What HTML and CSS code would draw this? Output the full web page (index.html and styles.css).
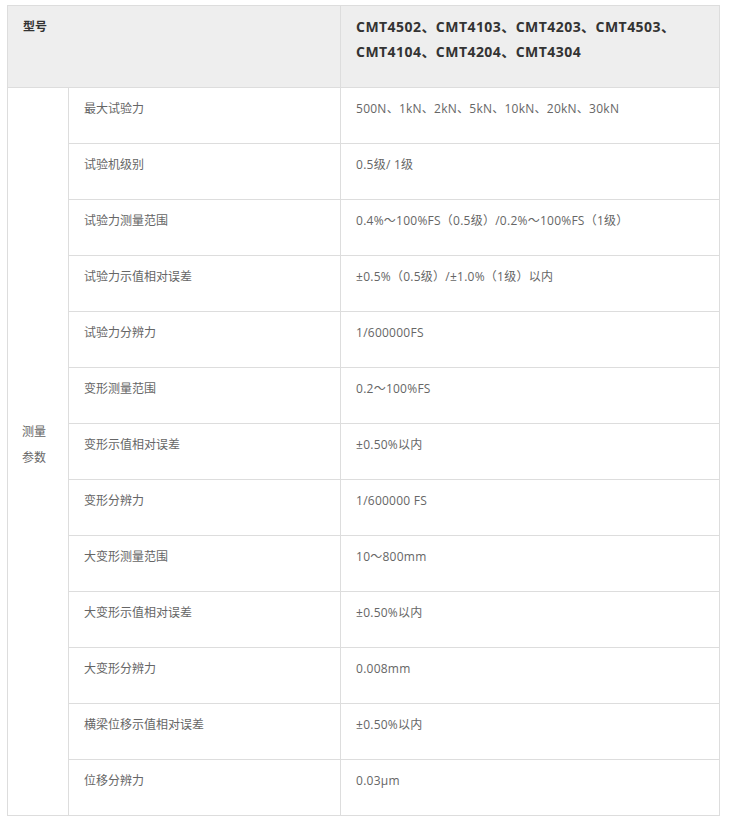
FILE: index.html
```html
<!DOCTYPE html>
<html lang="zh-CN">
<head>
<meta charset="utf-8">
<title>CMT 参数表</title>
<link rel="stylesheet" href="styles.css">
</head>
<body>
<div class="wrap">
<table class="spec">
  <colgroup>
    <col class="c1"><col class="c2"><col class="c3">
  </colgroup>
  <thead>
    <tr class="head">
      <th colspan="2" class="h-label">型号</th>
      <th class="h-models">CMT4502、CMT4103、CMT4203、CMT4503、CMT4104、CMT4204、CMT4304</th>
    </tr>
  </thead>
  <tbody>
    <tr><td rowspan="13" class="group">测量参数</td><td>最大试验力</td><td class="val">500N、1kN、2kN、5kN、10kN、20kN、30kN</td></tr>
    <tr><td>试验机级别</td><td class="val">0.5级/ 1级</td></tr>
    <tr><td>试验力测量范围</td><td class="val">0.4%～100%FS（0.5级）/0.2%～100%FS（1级）</td></tr>
    <tr><td>试验力示值相对误差</td><td class="val">±0.5%（0.5级）/±1.0%（1级）以内</td></tr>
    <tr><td>试验力分辨力</td><td class="val">1/600000FS</td></tr>
    <tr><td>变形测量范围</td><td class="val">0.2～100%FS</td></tr>
    <tr><td>变形示值相对误差</td><td class="val">±0.50%以内</td></tr>
    <tr><td>变形分辨力</td><td class="val">1/600000 FS</td></tr>
    <tr><td>大变形测量范围</td><td class="val">10～800mm</td></tr>
    <tr><td>大变形示值相对误差</td><td class="val">±0.50%以内</td></tr>
    <tr><td>大变形分辨力</td><td class="val">0.008mm</td></tr>
    <tr><td>横梁位移示值相对误差</td><td class="val">±0.50%以内</td></tr>
    <tr><td>位移分辨力</td><td class="val">0.03μm</td></tr>
  </tbody>
</table>
</div>
</body>
</html>
```

FILE: styles.css
```css
html, body {
  margin: 0;
  padding: 0;
  background: #fff;
}
body {
  font-family: "Open Sans", "Noto Sans CJK SC", sans-serif;
  font-size: 12px;
  color: #666;
}
.wrap {
  padding: 5px 0 0 7px;
}
.spec {
  border-collapse: collapse;
  width: 712px;
  table-layout: fixed;
}
.c1 { width: 61px; }
.c2 { width: 272px; }
.c3 { width: 379px; }
.spec th,
.spec td {
  border: 1px solid #dddddd;
  padding: 8px 15px;
  line-height: 25px;
  text-align: left;
  vertical-align: top;
}
.head th {
  background: #eeeeee;
  color: #333;
  font-weight: bold;
  height: 65px;
}
.h-label {
  font-size: 12px;
}
.h-models {
  font-size: 14px;
  letter-spacing: 0.45px;
}
.spec tbody td {
  height: 39px;
}
.spec td.val {
  letter-spacing: 0.25px;
}
.spec td.group {
  vertical-align: middle;
  padding: 0 14px 14px 14px;
  line-height: 26px;
}
```
